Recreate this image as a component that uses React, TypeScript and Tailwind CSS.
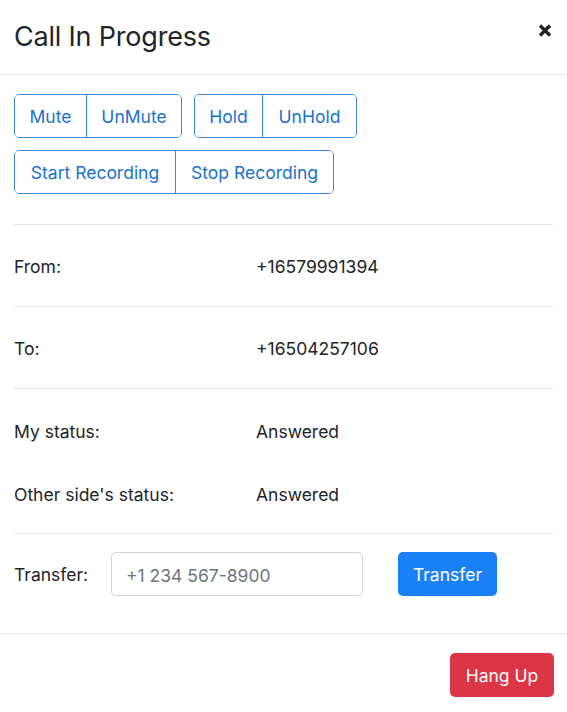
const groupCls =
  "flex h-[44px] rounded-[5px] border border-[#3d88d8] divide-x divide-[#3d88d8] overflow-hidden";
const btnCls =
  "h-full flex items-center justify-center pt-[3px] text-[17.5px] text-[#1a72cf] bg-white";

const InfoRow = ({ label, value }: { label: string; value: string }) => (
  <div className="flex items-center h-[82px] pt-[3px] border-b border-[#e3e6ea]">
    <span className="w-[242px]">{label}</span>
    <span>{value}</span>
  </div>
);

export default function App() {
  return (
    <div className="w-[567px] min-h-[712px] bg-white text-[#212529] font-['Inter',sans-serif] text-[17.5px]">
      {/* header */}
      <div className="flex justify-between h-[75px] border-b border-[#e3e6ea] pl-[14px] pr-[15px]">
        <h1 className="text-[27px] leading-[32px] pt-[21px] tracking-[-0.2px]">Call In Progress</h1>
        <button className="pt-[24px] h-fit">
          <svg width="14" height="13" viewBox="0 0 14 13">
            <path d="M2 1.5 L12 11.5 M12 1.5 L2 11.5" stroke="#222" strokeWidth="3.4" strokeLinecap="butt" />
          </svg>
        </button>
      </div>

      {/* body */}
      <div className="px-[14px] pt-[19px] pb-[37px]">
        <div className="flex flex-col gap-[12px]">
          <div className="flex gap-[12px]">
            <div className={groupCls}>
              <button className={`${btnCls} w-[72px]`}>Mute</button>
              <button className={`${btnCls} w-[94px]`}>UnMute</button>
            </div>
            <div className={groupCls}>
              <button className={`${btnCls} w-[68px]`}>Hold</button>
              <button className={`${btnCls} w-[93px]`}>UnHold</button>
            </div>
          </div>
          <div className="flex">
            <div className={groupCls}>
              <button className={`${btnCls} w-[161px]`}>Start Recording</button>
              <button className={`${btnCls} w-[157px]`}>Stop Recording</button>
            </div>
          </div>
        </div>

        <div className="mt-[30px] border-t border-[#e3e6ea]">
          <InfoRow label="From:" value="+16579991394" />
          <InfoRow label="To:" value="+16504257106" />
          <div className="flex flex-col pt-[12px] pb-[6px] border-b border-[#e3e6ea]">
            <div className="flex items-center h-[63px]">
              <span className="w-[242px]">My status:</span>
              <span>Answered</span>
            </div>
            <div className="flex items-center h-[63px]">
              <span className="w-[242px]">Other side's status:</span>
              <span>Answered</span>
            </div>
          </div>
        </div>

        <div className="flex items-center pt-[18px]">
          <span className="w-[97px] pt-[3px]">Transfer:</span>
          <input
            className="w-[252px] h-[44px] rounded-[5px] border border-[#ced4da] pl-[14px] pt-[3px] text-[17.5px] outline-none placeholder:text-[#6c757d]"
            placeholder="+1 234 567-8900"
          />
          <button className="ml-[35px] w-[99px] h-[44px] pt-[3px] rounded-[5px] bg-[#1a80f6] text-white text-[17.5px]">
            Transfer
          </button>
        </div>
      </div>

      {/* footer */}
      <div className="flex justify-end border-t border-[#e3e6ea] pt-[19px] pr-[13px]">
        <button className="w-[104px] h-[44px] pt-[3px] rounded-[5px] bg-[#dc3545] text-white text-[17.5px]">
          Hang Up
        </button>
      </div>
    </div>
  );
}
